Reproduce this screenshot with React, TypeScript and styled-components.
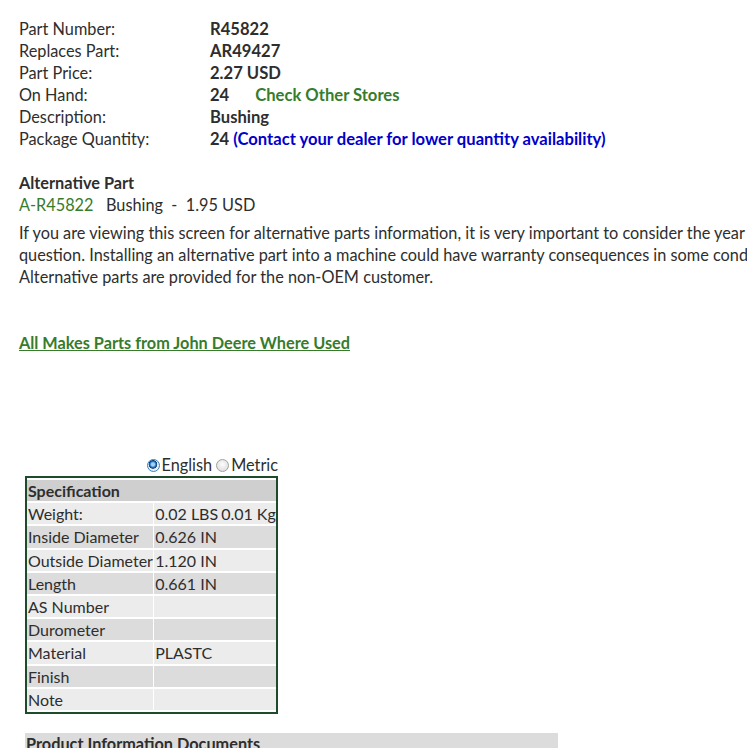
import React from "react";
import styled, { createGlobalStyle } from "styled-components";

const Global = createGlobalStyle`
  html, body { margin: 0; padding: 0; background: #fff; overflow: hidden; }
  body { font-family: Lato, "Open Sans", sans-serif; font-size: 16.3px; color: #2e2e2e; }
`;

const Page = styled.div`
  padding: 18px 0 0 19px;
  width: 728px;
`;

const InfoGrid = styled.div`
  display: grid;
  grid-template-columns: 191px auto;
  line-height: 22px;
`;

const Label = styled.div``;

const Value = styled.div`
  font-weight: bold;
  white-space: nowrap;
  font-size: 16.6px;
`;

const GreenLink = styled.a`
  color: #367c2b;
  font-weight: bold;
  text-decoration: none;
  margin-left: 26px;
`;

const BlueNote = styled.span`
  color: #0000cc;
`;

const AltSection = styled.div`
  margin-top: 22px;
  line-height: 22px;
`;

const AltTitle = styled.div`
  font-weight: bold;
`;

const AltNumber = styled.span`
  color: #367c2b;
`;

const Para = styled.p`
  margin: 6px 0 0;
  line-height: 22px;
  white-space: nowrap;
`;

const WhereUsed = styled.a`
  display: inline-block;
  margin-top: 44px;
  line-height: 22px;
  color: #367c2b;
  font-weight: bold;
  text-decoration: underline;
`;

const SpecBlock = styled.div`
  margin: 101px 0 0 6px;
  width: 253px;
`;

const UnitRow = styled.div`
  display: flex;
  justify-content: flex-end;
  align-items: center;
  line-height: 20px;
`;

const Radio = styled.span<{ $checked?: boolean }>`
  display: inline-block;
  width: 13px;
  height: 13px;
  border-radius: 50%;
  box-sizing: border-box;
  border: 1px solid ${(p) => (p.$checked ? "#3c7fb1" : "#a0a0a0")};
  background: ${(p) =>
    p.$checked
      ? "radial-gradient(circle at 45% 40%, #9fd3ff 0 1.5px, #2a6fb7 3px, #0d3b7a 4px, #e8eef5 4.6px)"
      : "radial-gradient(circle at 50% 40%, #fdfdfd, #d6d6d6)"};
  margin: 0 2px 0 4px;
`;

const SpecTable = styled.table`
  border: 2px solid #1d4b2c;
  border-spacing: 0 2px;
  border-collapse: separate;
  width: 253px;
  margin-top: 1px;
  line-height: 21.2px;
  font-size: 16px;
`;

const Cell = styled.td<{ $alt?: boolean }>`
  padding: 0 0 0 1px;
  background: ${(p) => (p.$alt ? "#dcdcdc" : "#ececec")};
  white-space: nowrap;
  border-right: 1px solid #fff;
  &:last-child { border-right: none; }
`;

const HeadCell = styled.th`
  text-align: left;
  padding: 0 0 0 1px;
  background: #cfcfcf;
  font-weight: bold;
`;

const Gap = styled.span`
  display: inline-block;
  width: 3px;
`;

const DocsBar = styled.div`
  margin: 19px 0 0 6px;
  width: 532px;
  background: #dcdcdc;
  font-weight: bold;
  line-height: 22px;
  padding-left: 1px;
`;

const specs: [string, React.ReactNode][] = [
  ["Weight:", <>0.02 LBS<Gap />0.01 Kg</>],
  ["Inside Diameter", "0.626 IN"],
  ["Outside Diameter", "1.120 IN"],
  ["Length", "0.661 IN"],
  ["AS Number", ""],
  ["Durometer", ""],
  ["Material", "PLASTC"],
  ["Finish", ""],
  ["Note", ""],
];

export default function App() {
  return (
    <>
      <Global />
      <Page>
        <InfoGrid>
          <Label>Part Number:</Label>
          <Value>R45822</Value>
          <Label>Replaces Part:</Label>
          <Value>AR49427</Value>
          <Label>Part Price:</Label>
          <Value>2.27 USD</Value>
          <Label>On Hand:</Label>
          <Value>
            24<GreenLink href="#">Check Other Stores</GreenLink>
          </Value>
          <Label>Description:</Label>
          <Value>Bushing</Value>
          <Label>Package Quantity:</Label>
          <Value>
            24 <BlueNote>(Contact your dealer for lower quantity availability)</BlueNote>
          </Value>
        </InfoGrid>
        <AltSection>
          <AltTitle>Alternative Part</AltTitle>
          <div>
            <AltNumber>A-R45822</AltNumber>&nbsp;&nbsp; Bushing &nbsp;-&nbsp; 1.95 USD
          </div>
        </AltSection>
        <Para>
          If you are viewing this screen for alternative parts information, it is very important to consider the year of the machine in
          <br />
          question. Installing an alternative part into a machine could have warranty consequences in some conditions.
          <br />
          Alternative parts are provided for the non-OEM customer.
        </Para>
        <WhereUsed href="#">All Makes Parts from John Deere Where Used</WhereUsed>
        <SpecBlock>
          <UnitRow>
            <Radio $checked />
            English
            <Radio />
            Metric
          </UnitRow>
          <SpecTable>
            <thead>
              <tr>
                <HeadCell colSpan={2}>Specification</HeadCell>
              </tr>
            </thead>
            <tbody>
              {specs.map(([k, v], i) => (
                <tr key={k}>
                  <Cell $alt={i % 2 === 1}>{k}</Cell>
                  <Cell $alt={i % 2 === 1}>{v}</Cell>
                </tr>
              ))}
            </tbody>
          </SpecTable>
        </SpecBlock>
        <DocsBar>Product Information Documents</DocsBar>
      </Page>
    </>
  );
}
